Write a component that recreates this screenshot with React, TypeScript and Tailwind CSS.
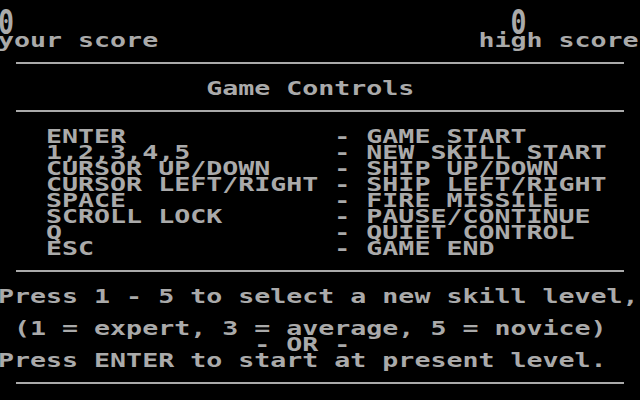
const controls: [string, string][] = [
  ['ENTER', 'GAME START'],
  ['1,2,3,4,5', 'NEW SKILL START'],
  ['CURSOR UP/DOWN', 'SHIP UP/DOWN'],
  ['CURSOR LEFT/RIGHT', 'SHIP LEFT/RIGHT'],
  ['SPACE', 'FIRE MISSILE'],
  ['SCROLL LOCK', 'PAUSE/CONTINUE'],
  ['Q', 'QUIET CONTROL'],
  ['ESC', 'GAME END'],
]

// one 40-column text row: 16px cells
function Line({ text, className = '' }: { text: string; className?: string }) {
  return (
    <div className={`-ml-[2px] h-[16px] leading-[16px] whitespace-pre origin-top-left scale-x-[1.4] ${className}`}>
      {text}
    </div>
  )
}

function Rule({ className = '' }: { className?: string }) {
  return <div className={`ml-[16px] w-[608px] h-[2px] bg-[#aaaaaa] ${className}`} />
}

export default function App() {
  return (
    <div
      className="w-[640px] h-[400px] bg-black text-[#aaaaaa] overflow-hidden font-bold text-[19px]"
      style={{ fontFamily: '"DejaVu Sans Mono", "Liberation Mono", monospace' }}
    >
      {/* scores */}
      <div className="h-[32px] pt-[7px]">
        <div className="-ml-[2px] h-[16px] leading-[16px] whitespace-pre origin-top-left scale-x-[1.4] scale-y-[1.8]">
          {'0' + ' '.repeat(31) + '0'}
        </div>
      </div>
      <Line text={'your score' + ' '.repeat(20) + 'high score'} />

      <Rule className="mt-[14px]" />
      <Line className="mt-[16px]" text={' '.repeat(13) + 'Game Controls'} />
      <Rule className="mt-[14px]" />

      <div className="mt-[16px]">
        {controls.map(([k, v]) => (
          <Line key={k} text={'   ' + k.padEnd(18) + '- ' + v} />
        ))}
      </div>

      <Rule className="mt-[14px]" />
      <Line className="mt-[16px]" text="Press 1 - 5 to select a new skill level," />
      <Line className="mt-[16px]" text=" (1 = expert, 3 = average, 5 = novice)" />
      <Line text={' '.repeat(16) + '- OR -'} />
      <Line text="Press ENTER to start at present level." />
      <Rule className="mt-[14px]" />
    </div>
  )
}
